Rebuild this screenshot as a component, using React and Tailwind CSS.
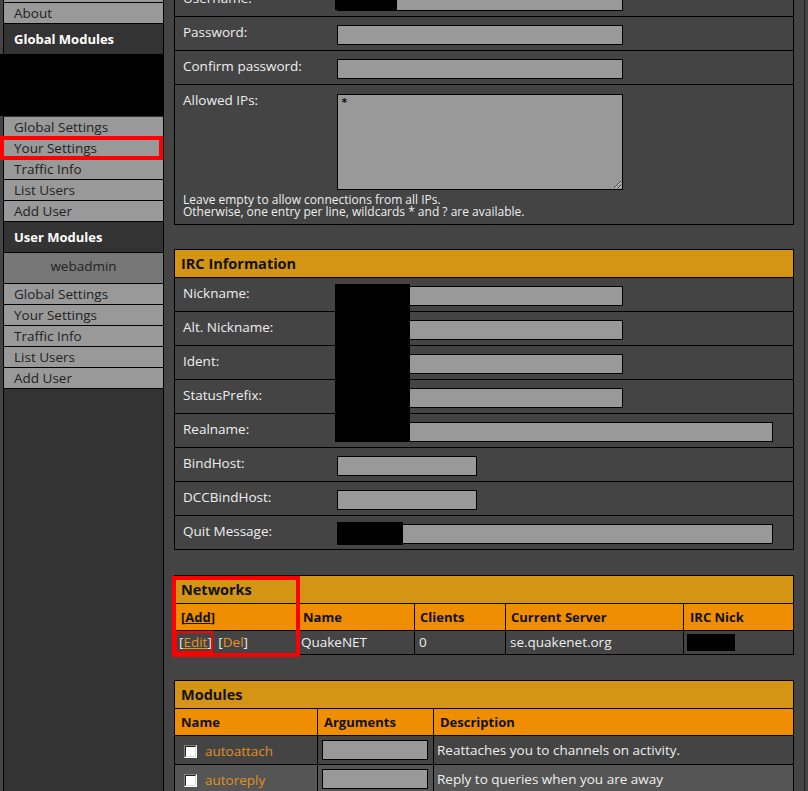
import React from 'react';

const navGlobal = ['Global Settings', 'Your Settings', 'Traffic Info', 'List Users', 'Add User'];

const ircFields = [
    ['Nickname:', 'w-[286px]'],
    ['Alt. Nickname:', 'w-[286px]'],
    ['Ident:', 'w-[286px]'],
    ['StatusPrefix:', 'w-[286px]'],
    ['Realname:', 'w-[436px]'],
    ['BindHost:', 'w-[140px]'],
    ['DCCBindHost:', 'w-[140px]'],
    ['Quit Message:', 'w-[436px]'],
];

const modules = [
    ['autoattach', 'Reattaches you to channels on activity.'],
    ['autoreply', 'Reply to queries when you are away'],
    ['autocycle', 'Rejoins channels to gain Op if you\'re the only user left'],
    ['autoop', 'Auto op the good people'],
    ['autovoice', 'Auto voice the good people'],
];

const NavItem = ({ children }) => (
    <div className="h-[21px] border-b border-black bg-[#999] pl-[10px] text-[13.5px] leading-[20px] text-[#222]">
        {children}
    </div>
);

const NavHeader = ({ children }) => (
    <div className="h-[31px] border-b border-black pl-[10px] text-[13px] font-bold leading-[30px] text-white">
        {children}
    </div>
);

const TextInput = ({ w }) => (
    <input readOnly className={`block h-5 ${w} border border-black bg-[#999] outline-none`} />
);

const FieldRow = ({ label, w, last }) => (
    <div className={`flex ${last ? 'h-[33px]' : 'h-[34px] border-b border-black'}`}>
        <div className="w-[162px] shrink-0 pl-2 pt-[7px] leading-[17px] text-[#eee]">{label}</div>
        <div className="pt-2">
            <TextInput w={w} />
        </div>
    </div>
);

const PanelTitle = ({ children }) => (
    <div className="h-[28px] border-b border-black bg-[#d39513] pl-[6px] text-[14.5px] font-bold leading-[27px] text-[#111]">
        {children}
    </div>
);

const Checkbox = () => (
    <div className="h-[13px] w-[13px] shrink-0 border border-t-[#808080] border-l-[#808080] border-r-white border-b-white">
        <div className="h-full w-full border border-t-[#222] border-l-[#222] border-r-[#ddd] border-b-[#ddd] bg-white" />
    </div>
);

const App = () => {
    return (
        <div className="relative flex min-h-screen overflow-hidden bg-[#444] font-['Open_Sans','DejaVu_Sans',sans-serif] text-[13.5px]">
            {/* sidebar */}
            <aside className="ml-[3px] w-[161px] shrink-0 border-x border-black bg-[#333]">
                <div className="-mt-[18px]">
                    <NavItem>Home</NavItem>
                </div>
                <NavItem>About</NavItem>
                <NavHeader>Global Modules</NavHeader>
                <div className="h-[62px]" />
                {navGlobal.map((item) => (
                    <NavItem key={'g' + item}>{item}</NavItem>
                ))}
                <NavHeader>User Modules</NavHeader>
                <div className="h-[31px] border-b border-black bg-[#777] text-center text-[13.5px] leading-[26px] text-[#222]">
                    webadmin
                </div>
                {navGlobal.map((item) => (
                    <NavItem key={'u' + item}>{item}</NavItem>
                ))}
            </aside>

            {/* redacted module list + highlight */}
            <div className="absolute left-0 top-[54px] h-[62px] w-[163px] bg-black" />
            <div className="absolute left-0 top-[136px] h-[24px] w-[163px] border-4 border-[#f00]" />

            {/* main column */}
            <main className="ml-[10px] w-[620px] shrink-0 pb-10">
                <div className="relative -mt-[18px] border border-black bg-[#444]">
                    <FieldRow label="Username:" w="w-[286px]" />
                    <FieldRow label="Password:" w="w-[286px]" />
                    <FieldRow label="Confirm password:" w="w-[286px]" />
                    <div className="flex">
                        <div className="w-[162px] shrink-0 pl-2 pt-[7px] leading-[17px] text-[#eee]">Allowed IPs:</div>
                        <div className="pt-[9px]">
                            <textarea
                                readOnly
                                value="*"
                                className="block h-[96px] w-[286px] border border-black bg-[#999] px-[3px] py-[2px] font-['DejaVu_Sans_Mono',monospace] text-[11px] font-bold leading-[12px] text-[#111] outline-none"
                            />
                        </div>
                    </div>
                    <div className="pl-2 pt-[4px] pb-[6px] text-[12px] leading-[12px] text-[#eee]">
                        Leave empty to allow connections from all IPs.
                        <br />
                        Otherwise, one entry per line, wildcards * and ? are available.
                    </div>
                    <div className="absolute left-[160px] top-0 h-[27px] w-[62px] bg-black" />
                </div>

                <div className="relative mt-6 border border-black bg-[#444]">
                    <PanelTitle>IRC Information</PanelTitle>
                    {ircFields.map(([label, w], i) => (
                        <FieldRow key={label} label={label} w={w} last={i === ircFields.length - 1} />
                    ))}
                    <div className="absolute left-[160px] top-[34px] h-[158px] w-[75px] bg-black" />
                    <div className="absolute left-[162px] top-[272px] h-[23px] w-[66px] bg-black" />
                </div>

                <div className="relative mt-[25px] border border-black bg-[#444]">
                    <PanelTitle>Networks</PanelTitle>
                    <div className="flex h-[27px] border-b border-black bg-[#ee8e00] text-[13px] font-bold leading-[26px] text-[#111]">
                        <div className="w-[123px] shrink-0 border-r border-black pl-[6px]">
                            [<span className="underline">Add</span>]
                        </div>
                        <div className="w-[117px] shrink-0 border-r border-black pl-[5px]">Name</div>
                        <div className="w-[91px] shrink-0 border-r border-black pl-[5px]">Clients</div>
                        <div className="w-[178px] shrink-0 border-r border-black pl-[5px]">Current Server</div>
                        <div className="flex-1 pl-[6px]">IRC Nick</div>
                    </div>
                    <div className="flex h-[23px] leading-[23px] text-[#eee]">
                        <div className="w-[123px] shrink-0 border-r border-black pl-[4px]">
                            [<span className="text-[#e69421] underline">Edit</span>]{' '}
                            <span className="ml-[3px]">[</span><span className="text-[#e69421]">Del</span>]
                        </div>
                        <div className="w-[117px] shrink-0 border-r border-black pl-[3px]">QuakeNET</div>
                        <div className="w-[91px] shrink-0 border-r border-black pl-[4px]">0</div>
                        <div className="w-[178px] shrink-0 border-r border-black pl-[4px]">se.quakenet.org</div>
                        <div className="flex flex-1 items-center pl-[3px]">
                            <div className="h-[17px] w-[48px] bg-black" />
                        </div>
                    </div>
                    <div className="absolute -left-[3px] top-0 h-[81px] w-[128px] border-4 border-[#f00]" />
                    <div className="absolute left-0 top-[55px] h-[22px] w-[38px] border-2 border-[#f00]" />
                </div>

                <div className="mt-[25px] border border-black bg-[#444]">
                    <PanelTitle>Modules</PanelTitle>
                    <div className="flex h-[27px] border-b border-black bg-[#ee8e00] text-[13px] font-bold leading-[26px] text-[#111]">
                        <div className="w-[143px] shrink-0 border-r border-black pl-[6px]">Name</div>
                        <div className="w-[116px] shrink-0 border-r border-black pl-[6px]">Arguments</div>
                        <div className="flex-1 pl-[6px]">Description</div>
                    </div>
                    {modules.map(([name, desc], i) => (
                        <div
                            key={name}
                            className={`flex h-[29px] border-b border-black text-[#eee] ${i % 2 ? 'bg-[#555]' : 'bg-[#444]'}`}
                        >
                            <div className="flex w-[143px] shrink-0 items-center gap-2 border-r border-black pl-[9px] pt-[2px]">
                                <Checkbox />
                                <span className="text-[#e0901c]">{name}</span>
                            </div>
                            <div className="w-[116px] shrink-0 border-r border-black pl-[4px] pt-[4px]">
                                <TextInput w="w-[106px]" />
                            </div>
                            <div className="flex flex-1 items-center pl-[3px] pt-[1px]">{desc}</div>
                        </div>
                    ))}
                </div>
            </main>

            <div className="ml-[10px] w-px shrink-0 bg-[#1e1e1e]" />
        </div>
    );
};

export default App;
